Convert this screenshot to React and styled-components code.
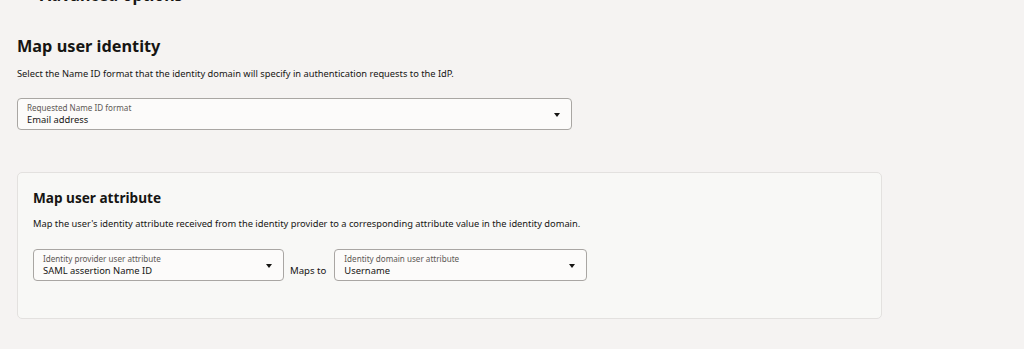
import React from 'react'
import styled, { createGlobalStyle } from 'styled-components'

const Global = createGlobalStyle`
  html, body { margin: 0; padding: 0; }
  body {
    background: #f5f3f2;
    font-family: "Noto Sans", "Liberation Sans", sans-serif;
    color: #161513;
    -webkit-font-smoothing: antialiased;
  }
`

const Page = styled.div`
  width: 1024px;
  height: 349px;
  overflow: hidden;
  padding: 0 17px;
  box-sizing: border-box;
`

const Collapsed = styled.div`
  margin-top: -13px;
  padding-left: 23px;
  font-size: 16px;
  font-weight: 700;
  line-height: 16px;
  height: 16px;
`

const Title = styled.h2`
  margin: 31px 0 0;
  font-size: 16.3px;
  line-height: 24px;
  font-weight: 700;
`

const SubTitle = styled.h3`
  margin: 0;
  font-size: 13.6px;
  line-height: 20px;
  font-weight: 700;
`

const Desc = styled.p`
  margin: ${p => p.$top || 9}px 0 0;
  font-size: 9.3px;
  line-height: 14px;
  color: #161513;
`

const Field = styled.div`
  box-sizing: border-box;
  width: ${p => p.$w}px;
  height: 32px;
  border: 1px solid #a9a6a3;
  border-radius: 4px;
  background: #fcfbfa;
  display: flex;
  align-items: center;
  padding: 0 11px 0 9px;
`

const FieldText = styled.div`
  flex: 1;
  display: flex;
  flex-direction: column;
  padding-top: 1px;
`

const Label = styled.span`
  font-size: 8.1px;
  line-height: 10px;
  color: #5d5955;
`

const Value = styled.span`
  font-size: 9.4px;
  line-height: 13px;
  color: #161513;
`

const Caret = styled.span`
  width: 0;
  height: 0;
  border-left: 3.5px solid transparent;
  border-right: 3.5px solid transparent;
  border-top: 4px solid #161513;
  margin-top: 1px;
`

const Card = styled.section`
  margin-top: 42px;
  width: 865px;
  height: 147px;
  box-sizing: border-box;
  background: #f8f8f6;
  border: 1px solid #e3e1df;
  border-radius: 5px;
  padding: 15px 15px;
`

const MapRow = styled.div`
  margin-top: 18px;
  display: flex;
  align-items: flex-end;
  gap: 6px;
`

const MapsTo = styled.span`
  font-size: 9.6px;
  line-height: 13px;
  padding-bottom: 4px;
  margin-right: 2px;
`

const FieldWrap = styled.div`
  margin-top: 17px;
`

const Select = ({ label, value, w }) => (
  <Field $w={w}>
    <FieldText>
      <Label>{label}</Label>
      <Value>{value}</Value>
    </FieldText>
    <Caret />
  </Field>
)

export default function App() {
  return (
    <>
      <Global />
      <Page>
        <Collapsed>Advanced options</Collapsed>
        <Title>Map user identity</Title>
        <Desc>Select the Name ID format that the identity domain will specify in authentication requests to the IdP.</Desc>
        <FieldWrap>
          <Select w={555} label="Requested Name ID format" value="Email address" />
        </FieldWrap>
        <Card>
          <SubTitle>Map user attribute</SubTitle>
          <Desc $top={9}>Map the user's identity attribute received from the identity provider to a corresponding attribute value in the identity domain.</Desc>
          <MapRow>
            <Select w={251} label="Identity provider user attribute" value="SAML assertion Name ID" />
            <MapsTo>Maps to</MapsTo>
            <Select w={253} label="Identity domain user attribute" value="Username" />
          </MapRow>
        </Card>
      </Page>
    </>
  )
}
